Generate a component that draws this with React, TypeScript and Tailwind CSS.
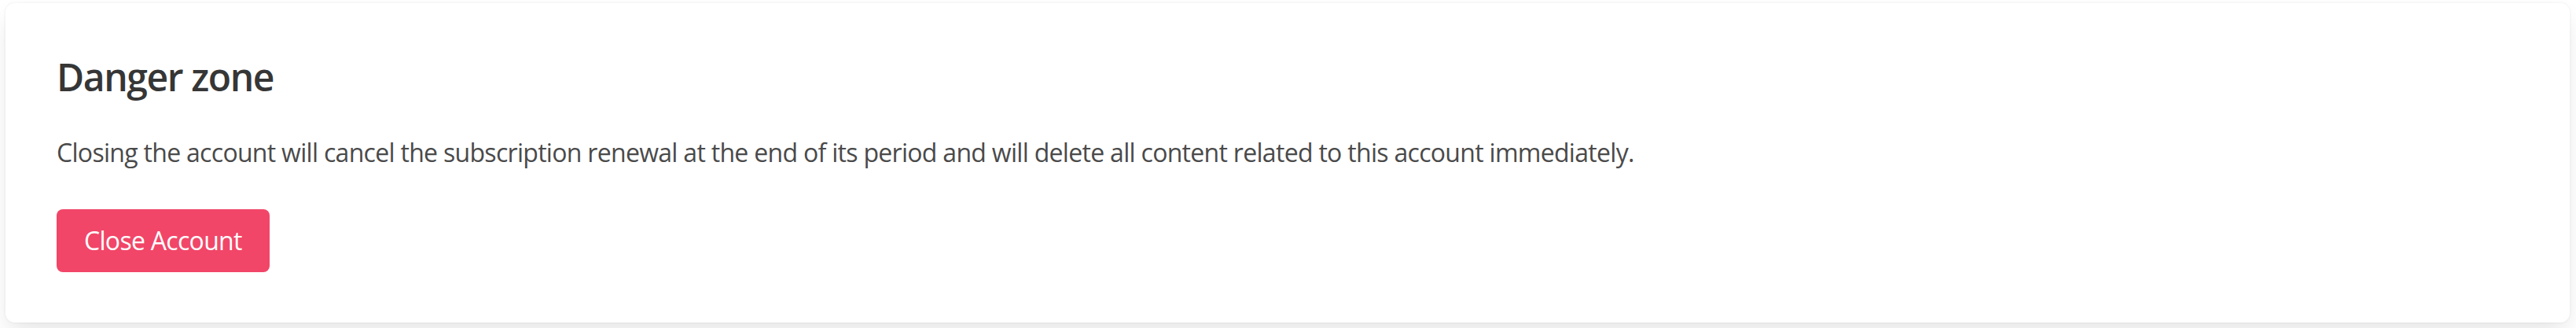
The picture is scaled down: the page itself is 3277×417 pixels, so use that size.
import React from 'react';

export default function App() {
    return (
        <div className="bg-white pt-[4px] pl-[7px] pr-[8px] pb-[7px]" style={{ fontFamily: '"Open Sans", "Noto Sans", sans-serif' }}>
            {/* Danger zone card */}
            <section className="bg-white rounded-[12px] shadow-[0_16px_32px_-4px_rgba(10,10,10,0.1),0_0_0_2px_rgba(10,10,10,0.02)] pt-[67px] pb-[64px] px-[65px]">
                <h2 className="text-[48px] leading-[54px] font-semibold tracking-[-1.4px] text-[#363636]">Danger zone</h2>
                <p className="mt-[45px] text-[32px] leading-[48px] tracking-[-0.7px] text-[#4a4a4a]">
                    Closing the account will cancel the subscription renewal at the end of its period and will delete all content related to this account immediately.
                </p>
                <button className="mt-[48px] h-[80px] px-[33px] rounded-[8px] border-2 border-transparent bg-[#f14668] text-white text-[32px] leading-none tracking-[-0.7px]">
                    Close Account
                </button>
            </section>
        </div>
    );
}
